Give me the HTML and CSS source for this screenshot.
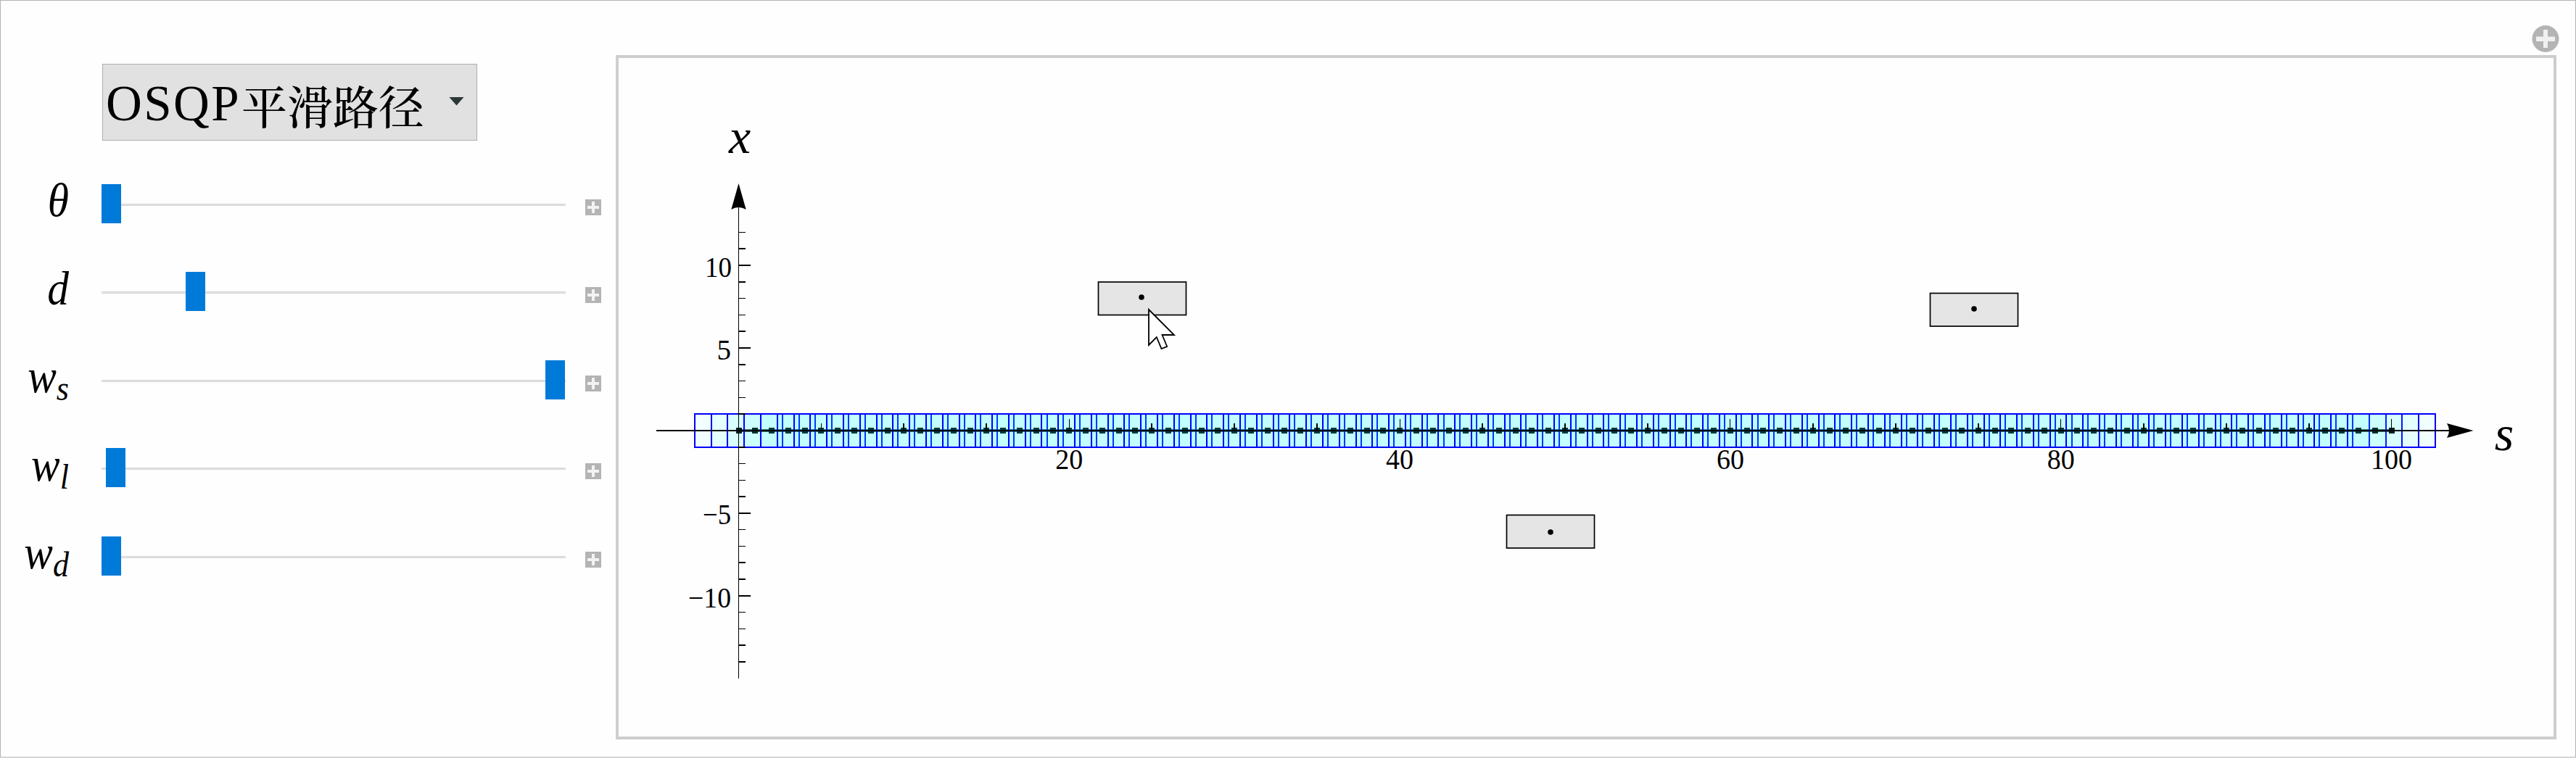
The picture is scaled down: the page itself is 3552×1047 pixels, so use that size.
FILE: index.html
```html
<!DOCTYPE html>
<html lang="zh">
<head>
<meta charset="utf-8">
<title>OSQP平滑路径</title>
<link rel="stylesheet" href="styles.css">
</head>
<body>
<main class="manipulate">
  <section class="controls">
    <button class="popup"><span class="latin">OSQP</span><span class="han">平滑路径</span><i class="caret"></i></button>
    <div class="row"><span class="name">θ</span><div class="slider"><i class="knob" style="margin-left:0px"></i></div><i class="plus"></i></div>
    <div class="row"><span class="name">d</span><div class="slider"><i class="knob" style="margin-left:116px"></i></div><i class="plus"></i></div>
    <div class="row"><span class="name">w<sub>s</sub></span><div class="slider"><i class="knob" style="margin-left:612px"></i></div><i class="plus"></i></div>
    <div class="row"><span class="name">w<sub>l</sub></span><div class="slider"><i class="knob" style="margin-left:6px"></i></div><i class="plus"></i></div>
    <div class="row"><span class="name">w<sub>d</sub></span><div class="slider"><i class="knob" style="margin-left:0px"></i></div><i class="plus"></i></div>
  </section>
  <section class="output">
    <svg class="more" viewBox="0 0 38 38"><circle cx="19" cy="18.500" r="18.500" fill="#b4b4b4"/><path d="M16 6h6v9.500h10v6.500H22v9H16v-9H6v-6.500h10z" fill="#f0f0f0"/></svg>
    <div class="frame"><svg class="plot" id="plot" viewBox="853 80 2668 936"></svg></div>
  </section>
</main>
<script src="plot.js"></script>
</body>
</html>
```
FILE: styles.css
```css
* { box-sizing: border-box; }
html { overflow: hidden; }
body { margin: 0; background: #fefefe; color: #000; font-family: "Liberation Serif", "Noto Sans CJK SC", serif; }
.manipulate { display: flex; width: 3552px; height: 1045px; border: 1px solid #b3b3b3; }
.controls { width: 848px; padding-top: 87px; }
.popup { display: flex; align-items: center; width: 517px; height: 106px; margin: 0 0 26px 140px; padding: 0 0 0 4px; border: 1px solid #adadad; border-radius: 0; background: #e1e1e1; color: #000; font-family: inherit; line-height: 1; text-align: left; }
.latin { width: 187px; font-size: 69px; letter-spacing: 2.400px; padding-top: 4px; }
.han { font-family: "Noto Serif CJK SC", "Noto Sans CJK SC", serif; font-size: 63px; font-weight: 500; padding-top: 4px; }
.caret { width: 21px; height: 12px; margin: 0 0 3px 34px; background: #2b3936; clip-path: polygon(0 0, 100% 0, 50% 100%); }
.row { display: flex; align-items: center; height: 121.500px; }
.name { width: 94px; text-align: right; font-size: 66px; font-style: italic; line-height: 1; padding-bottom: 9px; transform: scaleX(.9); transform-origin: right; }
.name sub { font-size: 49px; line-height: 0; vertical-align: -11px; }
.slider { display: flex; align-items: center; width: 640px; height: 54px; margin-left: 45px; background: linear-gradient(#d4d4d4 0 1px, #e6e6e6 1px 2px, #d4d4d4 2px) 0 27px / 100% 3px no-repeat; }
.knob { width: 27px; height: 54px; background: #007ad9; }
.plus { width: 22px; height: 22px; margin: 10px 0 0 27px; background: linear-gradient(#f2f2f2, #f2f2f2) 50% 50% / 16px 4px no-repeat, linear-gradient(#f2f2f2, #f2f2f2) 50% 50% / 4px 16px no-repeat, #b4b4b4; }
.output { display: flex; flex-direction: column; width: 2676px; padding-top: 34px; }
.more { align-self: flex-end; width: 38px; height: 38px; margin: 0 -4px 3px 0; }
.frame { width: 2676px; height: 944px; border: 4px solid #cdcdcd; border-left-color: #cfcfcf; }
.plot { display: block; width: 2668px; height: 936px; }
.plot text { font-family: "Liberation Serif", serif; }
.tick { font-size: 39px; }
.axis { font-size: 68px; font-style: italic; }
```
FILE: plot.js
```js
const svg = document.getElementById('plot');
const X0 = 1018.5, Y0 = 594, U = 22.79;
const px = s => X0 + s * U;
const py = x => Y0 - x * U;
const out = [];
const rect = (x, y, w, h, attrs) => out.push(`<rect x="${x}" y="${y}" width="${w}" height="${h}" ${attrs}/>`);
const text = (x, y, t, cls, anchor, len) => out.push(`<text x="${x}" y="${y}" class="${cls}" text-anchor="${anchor}"${len ? ` textLength="${len}" lengthAdjust="spacingAndGlyphs"` : ''}>${t}</text>`);

// planned path and its sample points
rect(X0, 592, px(100) - X0, 4, 'fill="#000" fill-opacity=".65"');
for (let s = 0; s <= 100; s++) rect(Math.round(px(s)) - 4, 590, 8, 8, 'fill="#000"');

// vehicle footprint at every sample
for (let s = 0; s <= 100; s++) {
  rect(Math.round(px(s) - 60.6), 571, 121, 46, 'fill="#0ff" fill-opacity=".05" stroke="#00f" stroke-width="2"');
}

// obstacles
for (const [x, y, cx, cy] of [[1514.5, 389, 1574, 410], [2661.5, 404.500, 2722, 426], [2077.5, 710.500, 2138, 734]]) {
  rect(x, y, 121, 45.5, 'fill="#e5e5e5" stroke="#000" stroke-width="1.7"');
  out.push(`<circle cx="${cx}" cy="${cy}" r="3.800"/>`);
}

// axes
rect(905, 593, 2475, 2, 'shape-rendering="crispEdges"');
rect(1018, 285, 1, 651, 'shape-rendering="crispEdges"');
out.push('<path d="M1018.500 253l10.200 36q-10.200-6-20.400 0z"/><path d="M3410.500 594l-36.500 10q6-10 0-20z"/>');
const thin = [12, 8, 7, 3, 2, -2, -3, -6, -7, -11, -12];
for (let i = -14; i <= 12; i++) {
  if (!i) continue;
  if (thin.includes(i)) rect(1019, Math.floor(py(i)), 9, 1, '');
  else rect(1019, Math.round(py(i)) - 1, i % 5 === 0 ? 16 : 9, 2, '');
}
for (let s = 5; s <= 100; s += 5) {
  const major = s % 20 === 0;
  if (major || s === 5) rect(Math.floor(px(s)), major ? 578 : 584, 1, major ? 16 : 10, '');
  else rect(Math.round(px(s)) - 1, 584, 2, 10, '');
}
text(1009, 382, '10', 'tick', 'end', 37);
text(1008, 496, '5', 'tick', 'end');
text(1008, 723, '−5', 'tick', 'end', 39);
text(1008, 838, '−10', 'tick', 'end', 59);
for (let s = 20; s <= 100; s += 20) text(px(s), 647, s, 'tick', 'middle', s === 100 ? 57 : 38);
text(1020, 211, 'x', 'axis', 'middle');
text(3453, 621, 's', 'axis', 'middle');

// mouse pointer
out.push('<path d="M1584 427l35 35h-16.500l6.700 16-7.700 3-6.700-16-10.800 11z" fill="#fff" stroke="#000" stroke-width="1.800"/>');
svg.innerHTML = out.join('');
```
